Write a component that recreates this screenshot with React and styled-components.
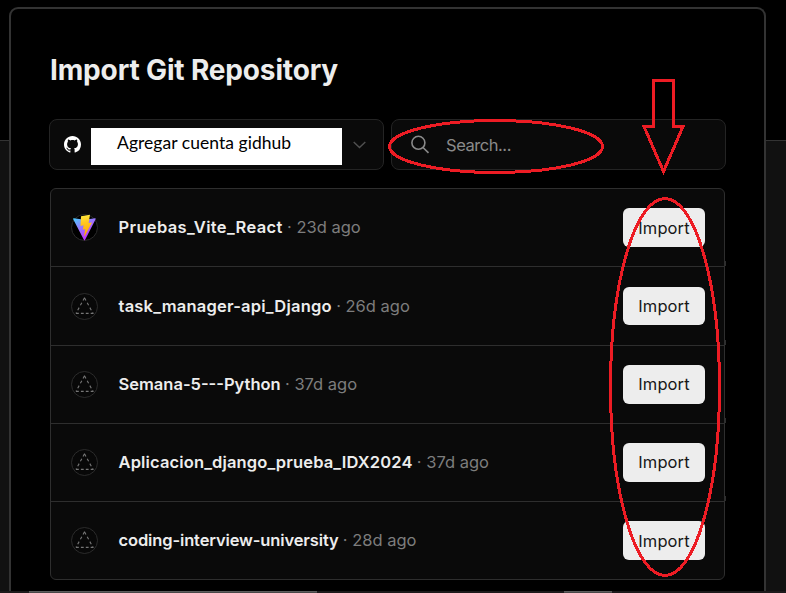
import React from "react";
import styled, { createGlobalStyle } from "styled-components";

const GlobalStyle = createGlobalStyle`
  * { box-sizing: border-box; }
  html, body { margin: 0; background: #000; overflow: hidden; }
  body { font-family: Inter, "Liberation Sans", sans-serif; -webkit-font-smoothing: antialiased; }
`;

const Page = styled.div`
  position: relative;
  width: 786px;
  height: 593px;
  overflow: hidden;
  display: flex;
  flex-direction: column;
  background: #000;
`;

const Columns = styled.div`
  display: grid;
  grid-template-columns: 9px 757px 20px;
  height: 591px;
`;

const Gutter = styled.div`
  margin-top: 140px;
  background: #111;
  border-top: 1px solid #333;
`;

const Card = styled.main`
  margin-top: 7px;
  padding: 43px 38px 0;
  border: 2px solid #333;
  border-bottom: 0;
  border-radius: 9px 9px 0 0;
  background: #000;
`;

const Title = styled.h1`
  margin: 0 0 0 1px;
  height: 36px;
  font-size: 28px;
  line-height: 36px;
  font-weight: 700;
  letter-spacing: -0.15px;
  color: #ededed;
  white-space: nowrap;
`;

const Filters = styled.div`
  display: flex;
  gap: 7px;
  margin-top: 31px;
`;

const Field = styled.div`
  display: flex;
  align-items: center;
  width: 335px;
  height: 51px;
  padding: 0 ${(p) => p.$end}px 0 ${(p) => p.$start}px;
  border: 1px solid #242424;
  border-radius: 8px;
  background: #0a0a0a;
`;

const AccountLabel = styled.div`
  width: 251px;
  height: 37px;
  margin: 3px 11px 0 10px;
  padding-left: 26px;
  background: #fff;
  color: #000;
  font: 400 17.5px/30px Lato, "Open Sans", sans-serif;
  letter-spacing: 0.04px;
  white-space: nowrap;
`;

const Placeholder = styled.span`
  margin-left: 16px;
  font-size: 16.5px;
  letter-spacing: -0.45px;
  color: #8a8a8a;
`;

const List = styled.ul`
  display: grid;
  grid-template-rows: 78px 79px 78px 78px 77px;
  width: 675px;
  height: 392px;
  margin: 18px 0 0 1px;
  padding: 0;
  list-style: none;
  border: 1px solid #2e2e2e;
  border-radius: 6px;
  background: #0a0a0a;
`;

const Row = styled.li`
  position: relative;
  display: flex;
  align-items: center;
  padding: 0 19px 0 20px;
  border-bottom: 1px solid #2e2e2e;

  &:last-child { border-bottom: 0; }

  &:not(:last-child)::after {
    content: "";
    position: absolute;
    right: -2px;
    bottom: 0;
    width: 1px;
    height: 5px;
    background: #2e2e2e;
  }
`;

const RepoName = styled.span`
  margin-left: 20.5px;
  padding-bottom: 1px;
  font-size: 16.5px;
  line-height: 20px;
  font-weight: 600;
  letter-spacing: ${(p) => p.$tracking}px;
  color: #ededed;
  white-space: nowrap;
`;

const Age = styled.span`
  flex: 1;
  margin-left: 4.3px;
  padding-bottom: 1px;
  font-size: 16.5px;
  line-height: 20px;
  letter-spacing: 0;
  color: #7d7d7d;
  white-space: nowrap;
`;

const ImportButton = styled.button`
  width: 82px;
  height: ${(p) => p.$height}px;
  padding: ${(p) => p.$drop}px 0 0;
  border: 0;
  border-radius: 6px;
  background: #ededed;
  color: #171717;
  font: 400 16.5px/37px Inter, sans-serif;
  letter-spacing: 0.1px;
`;

const BottomStrip = styled.div`
  display: flex;
  justify-content: space-between;
  height: 2px;
  padding: 0 174px 0 29px;
  background: #1d1a1b;
`;

const StripTab = styled.div`
  width: ${(p) => p.$width}px;
  background: #484848;
  border-top: 1px solid #5c5c5c;
`;

const Annotations = styled.svg`
  position: absolute;
  inset: 0;
  pointer-events: none;
`;

const GithubMark = () => (
  <svg width="17" height="17" viewBox="0 0 16 16" fill="#fff">
    <path d="M8 0C3.58 0 0 3.58 0 8c0 3.54 2.29 6.53 5.47 7.59.4.07.55-.17.55-.38 0-.19-.01-.82-.01-1.49-2.01.37-2.53-.49-2.69-.94-.09-.23-.48-.94-.82-1.13-.28-.15-.68-.52-.01-.53.63-.01 1.08.58 1.23.82.72 1.21 1.87.87 2.33.66.07-.52.28-.87.51-1.07-1.78-.2-3.64-.89-3.64-3.95 0-.87.31-1.59.82-2.15-.08-.2-.36-1.02.08-2.12 0 0 .67-.21 2.2.82.64-.18 1.32-.27 2-.27s1.36.09 2 .27c1.53-1.04 2.2-.82 2.2-.82.44 1.1.16 1.92.08 2.12.51.56.82 1.27.82 2.15 0 3.07-1.87 3.75-3.65 3.95.29.25.54.73.54 1.48 0 1.07-.01 1.93-.01 2.2 0 .21.15.46.55.38A8.01 8.01 0 0 0 16 8c0-4.42-3.58-8-8-8z" />
  </svg>
);

const Chevron = () => (
  <svg width="13" height="8" viewBox="0 0 13 8" fill="none" stroke="#505050" strokeWidth="1.4">
    <path d="M.7 1 6.5 6.6 12.3 1" />
  </svg>
);

const SearchIcon = () => (
  <svg width="19" height="19" viewBox="0 0 19 19" fill="none" stroke="#8a8a8a" strokeWidth="1.6">
    <circle cx="7.4" cy="7.8" r="6.5" />
    <path d="m12 12.5 5.5 5.4" />
  </svg>
);

const ViteIcon = () => (
  <svg width="27" height="27" viewBox="0 0 27 27">
    <defs>
      <linearGradient id="shield" x1="2" y1="4" x2="15" y2="24" gradientUnits="userSpaceOnUse">
        <stop offset="0" stopColor="#41d1ff" />
        <stop offset=".5" stopColor="#967aff" />
        <stop offset="1" stopColor="#bd34fe" />
      </linearGradient>
      <linearGradient id="bolt" x1="12" y1="1" x2="15" y2="20" gradientUnits="userSpaceOnUse">
        <stop offset="0" stopColor="#ffe83d" />
        <stop offset=".4" stopColor="#ffc820" />
        <stop offset="1" stopColor="#ffa800" />
      </linearGradient>
    </defs>
    <circle cx="13.5" cy="13.5" r="13" fill="#000" stroke="#2c2c2c" />
    <path d="M24.6 5.2 14 26q-.5.9-1 0L2.2 5.3q-.4-1.1.7-1l10.6 1.5L24 4.2q1.1 0 .6 1z" fill="url(#shield)" />
    <path d="m19 .7-9 1.5-.5 9.7 3.1-.6-.7 4.4 2.3-.7-1 6.4c-.1.8.3 1 .7.3l7.1-13.3-3.4.5z" fill="url(#bolt)" />
  </svg>
);

const EmptyIcon = () => (
  <svg width="27" height="27" viewBox="0 0 27 27" fill="none">
    <circle cx="13.5" cy="13.5" r="13" fill="#080808" stroke="#2c2c2c" />
    <path d="M13.5 4.8 5 20.4M13.5 4.8 22 20.4" stroke="#777" strokeWidth="1.1" strokeDasharray="3 2.6" />
    <path d="M5 20.4h17.5" stroke="#777" strokeWidth="1.1" strokeDasharray="2.8 2.1" />
  </svg>
);

const repos = [
  { name: "Pruebas_Vite_React", age: "23d ago", tracking: 0.35, height: 39, drop: 2, Icon: ViteIcon },
  { name: "task_manager-api_Django", age: "26d ago", tracking: 0.22, height: 38, drop: 0, Icon: EmptyIcon },
  { name: "Semana-5---Python", age: "37d ago", tracking: 0, height: 39, drop: 0, Icon: EmptyIcon },
  { name: "Aplicacion_django_prueba_IDX2024", age: "37d ago", tracking: 0.14, height: 39, drop: 0, Icon: EmptyIcon },
  { name: "coding-interview-university", age: "28d ago", tracking: -0.13, height: 39, drop: 2, Icon: EmptyIcon },
];

export default function App() {
  return (
    <>
      <GlobalStyle />
      <Page>
        <Columns>
          <Gutter />
          <Card>
            <Title>Import Git Repository</Title>
            <Filters>
              <Field $start={14} $end={17}>
                <GithubMark />
                <AccountLabel>Agregar cuenta gidhub</AccountLabel>
                <Chevron />
              </Field>
              <Field $start={19} $end={16}>
                <SearchIcon />
                <Placeholder>Search...</Placeholder>
              </Field>
            </Filters>
            <List>
              {repos.map(({ name, age, tracking, height, drop, Icon }) => (
                <Row key={name}>
                  <Icon />
                  <RepoName $tracking={tracking}>{name}</RepoName>
                  <Age>· {age}</Age>
                  <ImportButton $height={height} $drop={drop}>Import</ImportButton>
                </Row>
              ))}
            </List>
          </Card>
          <Gutter />
        </Columns>
        <BottomStrip>
          <StripTab $width={288} />
          <StripTab $width={48} />
        </BottomStrip>
        <Annotations
          width="786"
          height="593"
          fill="none"
          stroke="#ed1c24"
          strokeWidth="3"
          shapeRendering="crispEdges"
        >
          <ellipse cx="496" cy="146.5" rx="106.5" ry="26" />
          <ellipse cx="665" cy="387" rx="54.5" ry="188.5" />
          <path d="M653.5 80.5h20v46h9.5L663.5 171.5 644 126.5h9.5z" />
        </Annotations>
      </Page>
    </>
  );
}
